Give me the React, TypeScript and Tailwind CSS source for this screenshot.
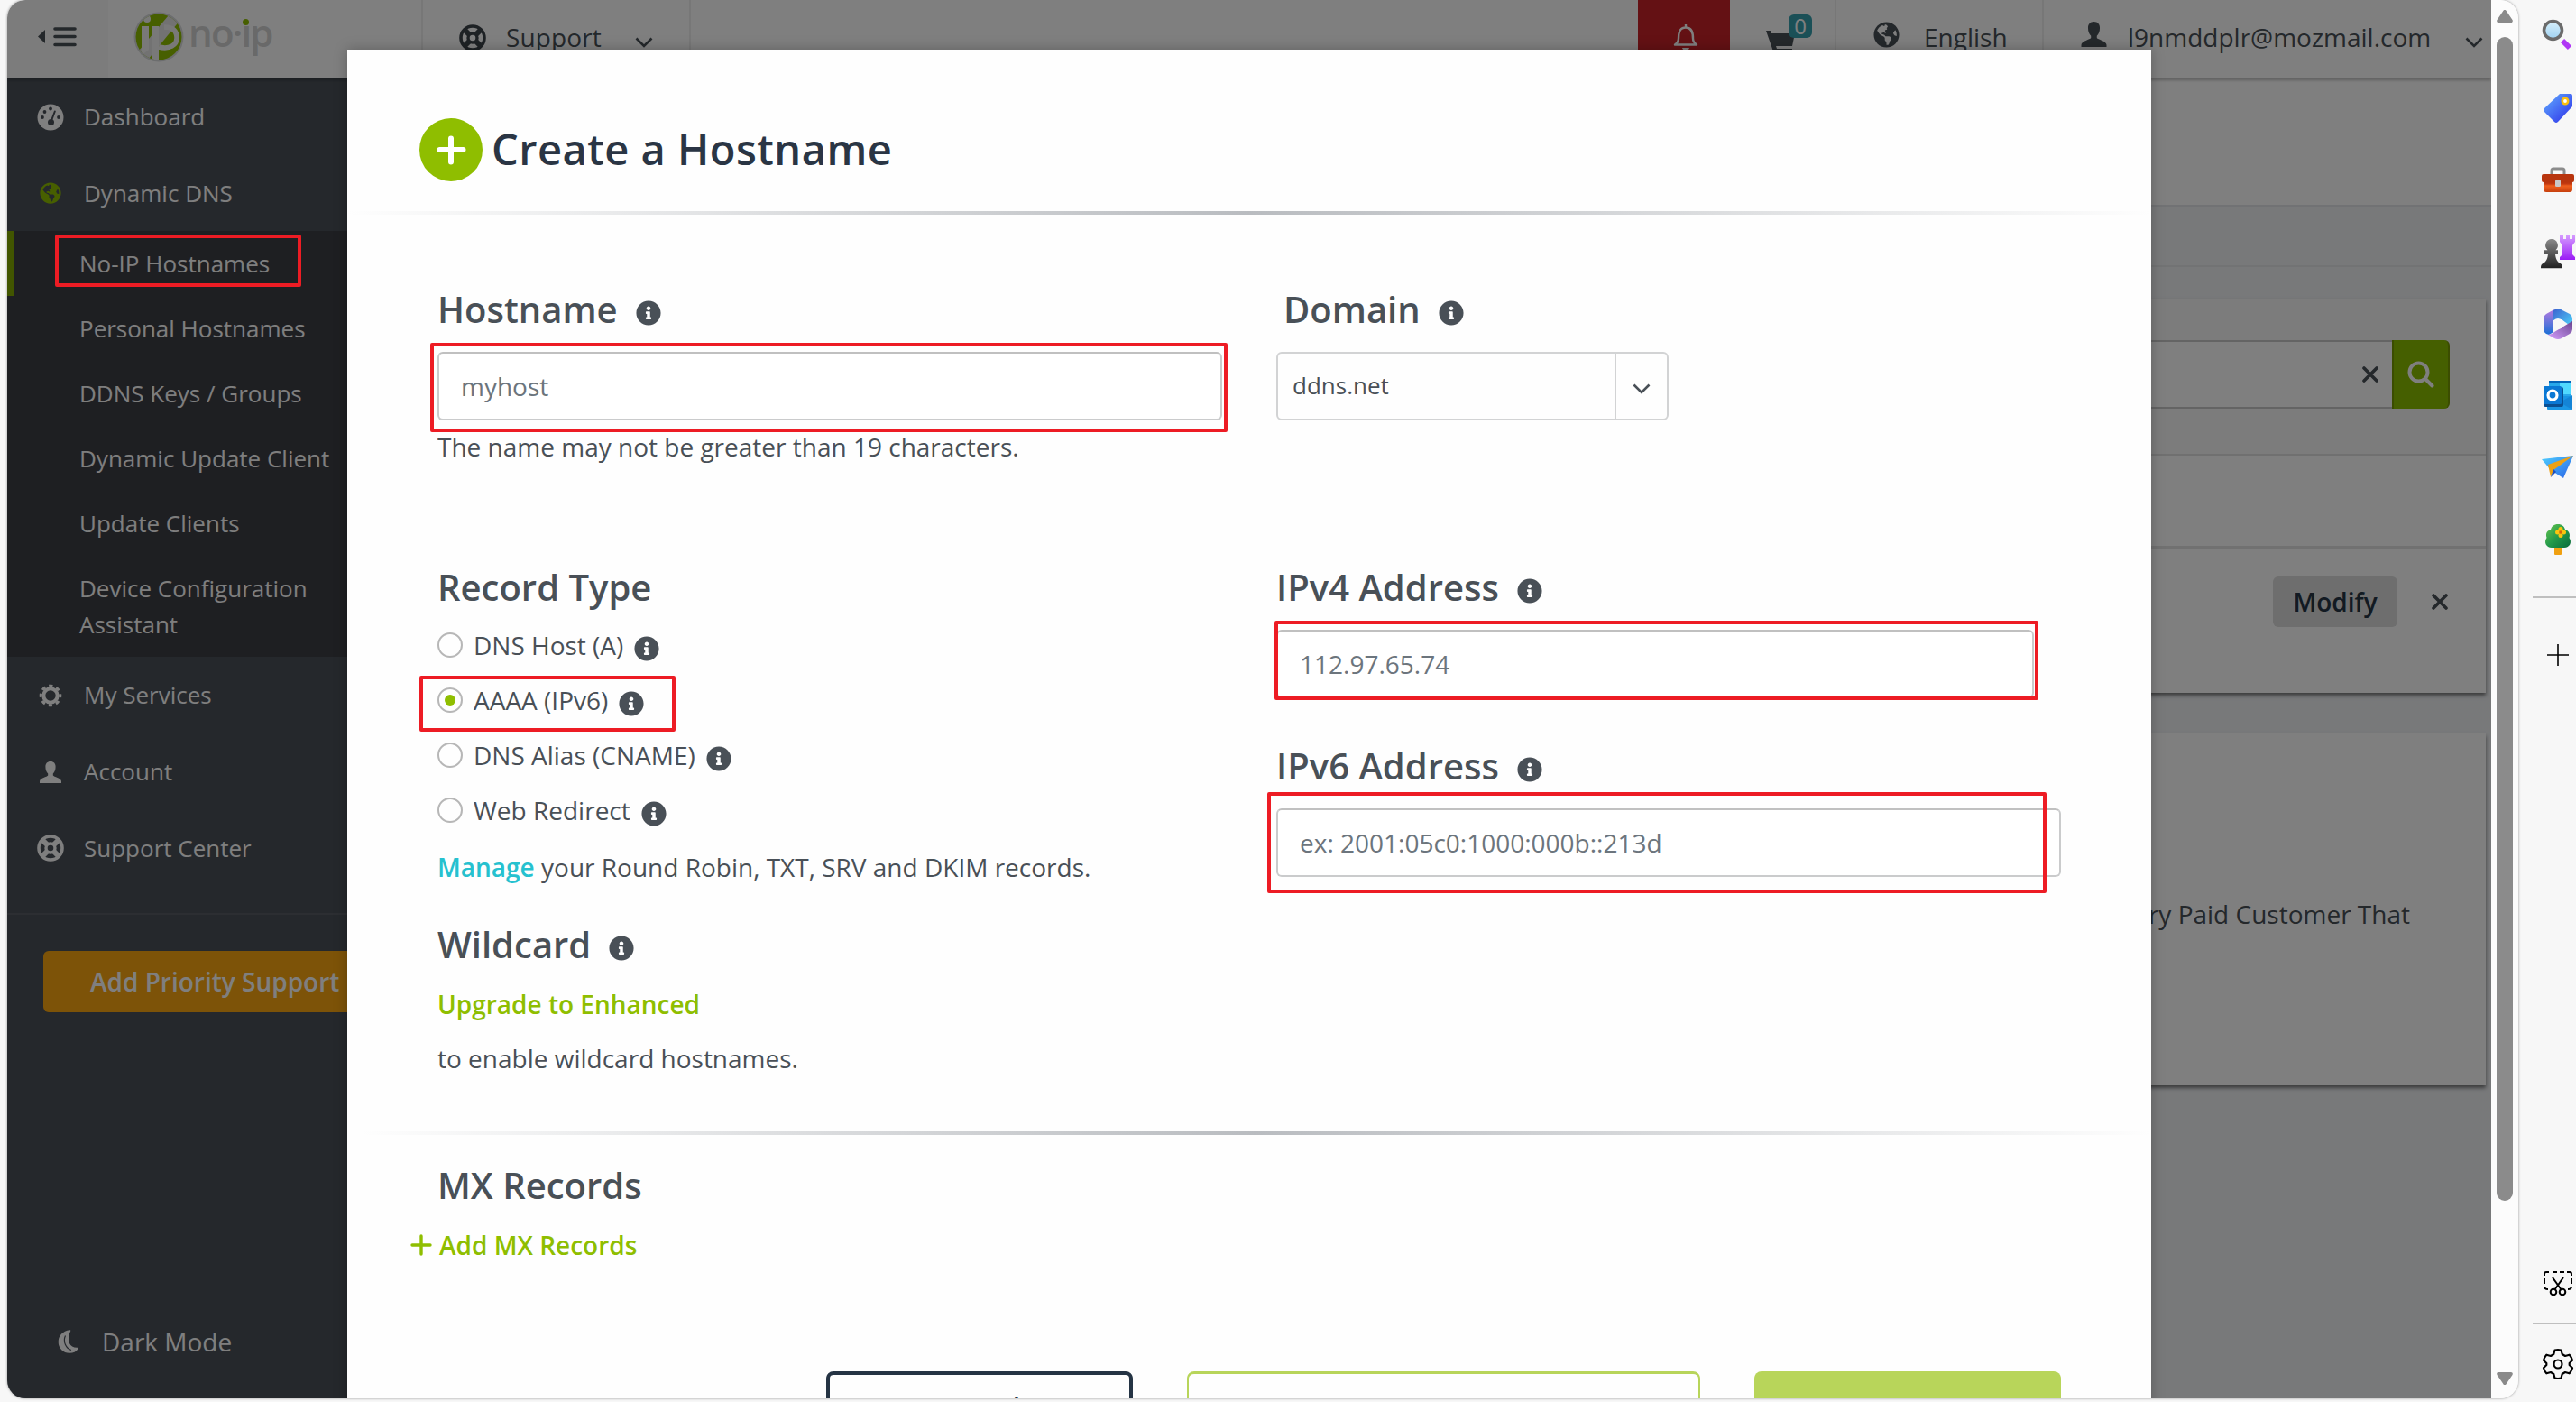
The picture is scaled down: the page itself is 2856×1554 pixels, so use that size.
import React from "react";
import { FaGlobeAmericas, FaInfoCircle } from "react-icons/fa";

const Chevron = ({ className = "" }: { className?: string }) => (
  <svg viewBox="0 0 20 12" className={`h-3 w-5 ${className}`} fill="none" stroke="currentColor" strokeWidth="2.6">
    <path d="M1.5 1.5 10 10l8.5-8.5" />
  </svg>
);

const Cross = () => (
  <svg viewBox="0 0 18 18" className="h-[18px] w-[18px]" fill="none" stroke="currentColor" strokeWidth="3.6" strokeLinecap="round">
    <path d="M2 2l14 14M16 2 2 16" />
  </svg>
);

const Ring = () => (
  <svg viewBox="0 0 30 30" className="h-[30px] w-[30px]" fill="none" stroke="currentColor">
    <circle cx="15" cy="15" r="13" strokeWidth="3.6" />
    <circle cx="15" cy="15" r="5" strokeWidth="3.4" />
    <path d="M5.5 5.500l5.500 5.500M24.500 5.500 19 11M5.500 24.500 11 19M24.500 24.500 19 19" strokeWidth="6" />
  </svg>
);

const Gauge = () => (
  <svg viewBox="0 0 30 30" className="h-[30px] w-[30px]">
    <circle cx="15" cy="15" r="14.500" fill="currentColor" />
    <g fill="#4b5159">
      <circle cx="15" cy="5.500" r="1.900" />
      <circle cx="8.500" cy="9" r="1.900" />
      <circle cx="6" cy="15" r="1.900" />
      <circle cx="24" cy="15" r="1.900" />
      <circle cx="15.500" cy="20.500" r="3.500" />
    </g>
    <path d="M15.500 20 19.800 8.500" stroke="#4b5159" strokeWidth="2" strokeLinecap="round" />
  </svg>
);

const Person = ({ className = "h-6 w-6" }: { className?: string }) => (
  <svg viewBox="0 0 24 24" className={className} fill="currentColor">
    <path d="M12 0c-3.600 0-5.600 2.400-5.600 5.800 0 3.600 1 6 2.800 7.600v2.100C8.500 17 0 18.500 0 22v2h24v-2c0-3.500-8.500-5-9.200-6.500v-2.100c1.800-1.600 2.800-4 2.800-7.600C17.600 2.400 15.600 0 12 0z" />
  </svg>
);

const Moon = () => (
  <svg viewBox="0 0 24 26" className="h-[26px] w-6" fill="currentColor" stroke="currentColor" strokeWidth="1.600" strokeLinejoin="round">
    <path d="M13.500 1C5.500 2 1.500 7.500 1.500 13.500 1.500 20 6.500 25 13 25c4 0 7-1.500 9-4.500C12.500 21 8 12 13.500 1z" />
    <path d="M8.500 6.500C5.500 13 9 20.500 15 22.500" fill="none" stroke="#4b5159" strokeWidth="1.200" />
  </svg>
);

const Info = ({ className = "" }: { className?: string }) => (
  <FaInfoCircle className={`h-7 w-7 shrink-0 text-[#495057] ${className}`} />
);

function Logo() {
  return (
    <div className="flex items-start pl-[28px]">
      <svg viewBox="0 0 56 56" className="h-[56px] w-[56px]">
        <defs>
          <clipPath id="disc">
            <circle cx="28" cy="28" r="25.500" />
          </clipPath>
        </defs>
        <circle cx="28" cy="28" r="27.500" fill="#d9dbdd" />
        <g clipPath="url(#disc)">
          <rect width="56" height="56" fill="#8fbe00" />
          <path d="M44-2 56 4 12 58 0 50z" fill="#e4e4e4" />
          <path d="M9 16h8v26l-8 6zM21 16h7v40h-7z" fill="#f3f3f3" />
          <path d="M34 17c9 0 14 4 14 12s-8 13-20 10" fill="none" stroke="#f3f3f3" strokeWidth="5.500" />
          <circle cx="15" cy="8" r="4" fill="#f3f3f3" />
        </g>
      </svg>
      <div className="relative ml-[5px] h-[56px] whitespace-nowrap font-['Open_Sans',sans-serif] text-[42px] font-semibold leading-[46px] tracking-[-1.800px] text-[#d2d2d2]">
        no·ıp
        <span className="absolute left-[60px] top-[8px] h-[7px] w-[7px] rounded-full bg-[#8fbe00]" />
      </div>
    </div>
  );
}

function TopBar() {
  return (
    <header className="relative flex h-[87px] shrink-0 bg-white text-[28px] text-[#495057] shadow-[0_2px_3px_rgba(0,0,0,0.25)]">
      <div className="flex w-[112px] items-start bg-[#f8f8f8] pl-[34px] pt-[29px]">
        <svg viewBox="0 0 44 24" className="h-6 w-11" fill="none">
          <path d="M8 4v15L0 11.500z" fill="#495057" />
          <path d="M19 3h22M19 11.500h22M19 20.500h22" stroke="#495057" strokeWidth="3.600" strokeLinecap="round" />
        </svg>
      </div>
      <div className="flex w-[349px] items-start border-r-2 border-[#efefef] pt-[13px]">
        <Logo />
      </div>
      <div className="flex w-[297px] items-start border-r-2 border-[#efefef] pl-[40px] pt-[20px]">
        <span className="mt-[7px] text-[#3d444b]">
          <Ring />
        </span>
        <span className="ml-[22px] mt-px h-10 leading-10 tracking-[0.100px]">Support</span>
        <Chevron className="ml-[37px] mt-[21px]" />
      </div>
      <div className="flex-1" />
      <div className="flex w-[102px] justify-center bg-[#c92228] pl-[3px] pt-[26px] text-white">
        <svg viewBox="0 0 28 30" className="h-[30px] w-7" fill="none" stroke="currentColor" strokeWidth="2.400">
          <path d="M14 1v3M2 23.500h24c-3-2-4-4-4-7 0-7-1.500-12-8-12s-8 5-8 12c0 3-1 5-4 7z" strokeLinejoin="round" />
          <path d="M10 27h8c-.5 2-2 3-4 3s-3.500-1-4-3z" fill="currentColor" stroke="none" />
        </svg>
      </div>
      <div className="relative w-[118px] border-r-2 border-[#efefef] pl-[40px] pt-[33px]">
        <svg viewBox="0 0 32 30" className="h-[30px] w-8" fill="#495057">
          <path d="M0 1h5l1 3h26l-3 14H11l1 3h17v3H8z" />
        </svg>
        <span className="absolute left-[65px] top-[16px] h-[26px] w-[26px] rounded-[6px] bg-[#37a0af] text-center text-[24px] leading-[26px] text-white">0</span>
      </div>
      <div className="flex w-[230px] items-start border-r-2 border-[#efefef] pl-[41px] pt-[20px]">
        <FaGlobeAmericas className="mt-[4px] h-[29px] w-[29px]" />
        <span className="ml-[27px] mt-px leading-10">English</span>
      </div>
      <div className="flex w-[496px] items-start pl-[41px] pt-[20px]">
        <Person className="mt-[4px] h-[28px] w-[29px]" />
        <span className="ml-[23px] mt-px w-[374px] leading-10">l9nmddplr@mozmail.com</span>
        <Chevron className="mt-[21px]" />
      </div>
    </header>
  );
}

const subItems = ["No-IP Hostnames", "Personal Hostnames", "DDNS Keys / Groups", "Dynamic Update Client", "Update Clients"];

function NavItem({ icon, label, height = "h-[85px]" }: { icon: React.ReactNode; label: string; height?: string }) {
  return (
    <div className={`flex items-center ${height}`}>
      <span className="ml-[33px] flex w-[30px] justify-center">{icon}</span>
      <span className="ml-[22px]">{label}</span>
    </div>
  );
}

function Sidebar() {
  return (
    <nav className="flex w-[440px] shrink-0 flex-col bg-[#4b5159] text-[26px] text-white">
      <NavItem icon={<Gauge />} label="Dashboard" />
      <NavItem height="h-[84px]" icon={<FaGlobeAmericas className="h-6 w-6 text-[#8fbe00]" />} label="Dynamic DNS" />
      <div className="flex h-[472px] flex-col bg-[#3c3e45] text-[#fdfdfd]">
        {subItems.map((s, i) => (
          <div key={s} className={`flex h-[72px] items-center border-l-8 pl-[72px] ${i === 0 ? "border-[#82aa00]" : "border-transparent"}`}>
            {s}
          </div>
        ))}
        <div className="pl-[80px] pt-[16px] leading-10">
          Device Configuration
          <br />
          Assistant
        </div>
      </div>
      <NavItem
        icon={
          <svg viewBox="0 0 26 26" className="h-[26px] w-[26px]" fill="none" stroke="currentColor">
            <circle cx="13" cy="13" r="7.700" strokeWidth="4" />
            <circle cx="13" cy="13" r="10.800" strokeWidth="3" strokeDasharray="4.240 4.240" strokeDashoffset="2.120" />
          </svg>
        }
        label="My Services"
      />
      <NavItem icon={<Person />} label="Account" />
      <NavItem icon={<Ring />} label="Support Center" height="h-[84px]" />
      <div className="mt-[30px] h-[2px] bg-[#585d64]" />
      <div className="ml-[40px] mt-[40px] flex h-[68px] items-center rounded-[6px] bg-[#fba610] pl-[52px] text-[28px] font-semibold">
        Add Priority Support
      </div>
      <div className="mt-auto flex h-[60px] items-center pb-[2px] pl-[56px] text-[28px]">
        <Moon />
        <span className="ml-[25px]">Dark Mode</span>
      </div>
      <div className="h-[32px]" />
    </nav>
  );
}

function Background() {
  return (
    <div className="flex min-h-0 flex-1">
      <Sidebar />
      <main className="flex flex-1 flex-col bg-[#f0f2f5] pr-[6px]">
        <div className="-mr-[6px] h-[142px] border-b-2 border-[#e3e5e8] bg-white" />
        <div className="-mr-[6px] h-[67px] border-b-2 border-[#e4e6e9]" />
        <section className="mt-[35px] h-[437px] bg-white shadow-[0_3px_4px_rgba(0,0,0,0.500)]">
          <div className="flex h-[174px] items-start justify-end border-b-2 border-[#e0e0e0] bg-[#f9f9f9] pr-[40px] pt-[46px]">
            <div className="flex h-[76px] w-[400px] items-center justify-end border-y-2 border-[#c8c8c8] bg-white pr-[15px] text-[#495057]">
              <Cross />
            </div>
            <div className="flex h-[76px] w-[64px] items-center justify-center rounded-r-[6px] border-x-2 border-[#769b00] bg-[#8bbe00] text-white">
              <svg viewBox="0 0 30 30" className="h-[30px] w-[30px]" fill="none" stroke="currentColor" strokeWidth="4" strokeLinecap="round">
                <circle cx="12.500" cy="12.500" r="10" />
                <path d="M20 20l7.500 7.500" />
              </svg>
            </div>
          </div>
          <div className="h-[104px] border-b-4 border-[#e2e2e2]" />
          <div className="flex items-center justify-end pr-[42px] pt-[30px]">
            <span className="flex h-[56px] w-[138px] items-center justify-center rounded-[6px] bg-[#dcdcdc] text-[28px] font-semibold text-[#253444]">
              Modify
            </span>
            <span className="ml-[38px] text-[#495057]">
              <Cross />
            </span>
          </div>
        </section>
        <section className="mt-[45px] flex h-[390px] justify-end bg-white pr-[84px] pt-[180px] text-[28px] text-[#495057] shadow-[0_3px_4px_rgba(0,0,0,0.500)]">
          <span className="leading-10">Every Paid Customer That</span>
        </section>
      </main>
    </div>
  );
}

function Heading({ text, info = true, className = "" }: { text: string; info?: boolean; className?: string }) {
  return (
    <div className={`flex h-[56px] items-center ${className}`}>
      <h3 className="whitespace-nowrap text-[40px] font-semibold leading-[56px]">{text}</h3>
      {info && <Info className="ml-[20px] mt-[8px]" />}
    </div>
  );
}

function Field({ text, className = "" }: { text: string; className?: string }) {
  return (
    <div className={`flex h-[76px] items-center rounded-[6px] border-2 border-[#cacbcc] border-t-[#c0c0c0] bg-white pb-px pl-[24px] text-[28px] text-[#6c757d] ${className}`}>
      {text}
    </div>
  );
}

function Radio({ text, on = false }: { text: string; on?: boolean }) {
  return (
    <div className="flex h-[61px] items-center">
      <span className="flex h-7 w-7 items-center justify-center rounded-full border-2 border-[#b7b7b7]">
        {on && <span className="h-3 w-3 rounded-full bg-[#8fbe00]" />}
      </span>
      <span className="ml-[12px]">{text}</span>
      <Info className="ml-[12px] mt-[9px]" />
    </div>
  );
}

function Modal() {
  return (
    <div className="absolute left-[377px] top-[55px] flex h-[1600px] w-[2000px] flex-col bg-[#fefefe] text-[28px] text-[#495057] shadow-[0_0_14px_rgba(0,0,0,0.250)]">
      <div className="flex h-[179px] items-start pl-[80px] pt-[75px]">
        <svg viewBox="0 0 70 70" className="mt-[1px] h-[70px] w-[70px]">
          <circle cx="35" cy="35" r="35" fill="#8fbe00" />
          <path d="M35 22.500v26M22.500 35h26" stroke="#fff" strokeWidth="6" strokeLinecap="round" />
        </svg>
        <h2 className="ml-[10px] text-[47px] font-semibold leading-[70px] tracking-[0.470px] text-[#2a3544]">Create a Hostname</h2>
      </div>
      <div className="h-1 shrink-0 bg-gradient-to-r from-[#fefefe] via-[#b9bcc0] to-[#fefefe]" />

      <div className="flex h-[326px] pl-[100px] pt-[77px]">
        <div className="w-[930px]">
          <Heading text="Hostname" />
          <Field text="myhost" className="mt-[19px] w-[870px]" />
          <div className="mt-[9px] leading-10">The name may not be greater than 19 characters.</div>
        </div>
        <div>
          <Heading text="Domain" className="pl-[8px]" />
          <div className="mt-[19px] flex h-[76px] w-[435px] rounded-[6px] border-2 border-[#d2d3d4] text-[26px]">
            <span className="flex flex-1 items-center pb-px pl-[16px]">ddns.net</span>
            <span className="flex w-[58px] items-center justify-center border-l-2 border-[#d2d3d4] pt-[6px]">
              <Chevron />
            </span>
          </div>
        </div>
      </div>

      <div className="flex h-[694px] pl-[100px] pt-[59px]">
        <div className="w-[930px]">
          <Heading text="Record Type" info={false} />
          <div className="mt-[5px]">
            <Radio text="DNS Host (A)" />
            <Radio text="AAAA (IPv6)" on />
            <Radio text="DNS Alias (CNAME)" />
            <Radio text="Web Redirect" />
          </div>
          <div className="mt-[13px] leading-10">
            <span className="font-semibold text-[#26c1cf]">Manage</span> your Round Robin, TXT, SRV and DKIM records.
          </div>
          <Heading text="Wildcard" className="mt-[38px]" />
          <div className="mt-[18px] font-semibold leading-10 text-[#8fbe00]">Upgrade to Enhanced</div>
          <div className="mt-[20px] leading-10">to enable wildcard hostnames.</div>
        </div>
        <div>
          <Heading text="IPv4 Address" />
          <Field text="112.97.65.74" className="mt-[19px] w-[840px]" />
          <Heading text="IPv6 Address" className="mt-[47px]" />
          <Field text="ex: 2001:05c0:1000:000b::213d" className="mt-[19px] w-[870px]" />
        </div>
      </div>
      <div className="-mt-[4px] ml-[15px] h-1 shrink-0 bg-gradient-to-r from-[#fefefe] via-[#b9bcc0] to-[#fefefe]" />

      <div className="pl-[70px] pt-[28px]">
        <Heading text="MX Records" info={false} className="pl-[30px]" />
        <div className="mt-[18px] flex h-10 items-center font-semibold text-[#8fbe00]">
          <svg viewBox="0 0 24 24" className="h-6 w-6" stroke="currentColor" strokeWidth="3.400" strokeLinecap="round">
            <path d="M12 2v20M2 12h20" />
          </svg>
          <span className="ml-[8px]">Add MX Records</span>
        </div>
      </div>
      <div className="ml-[531px] mt-[120px] flex gap-[60px] font-semibold">
        <span className="flex h-[80px] w-[340px] justify-center rounded-[8px] border-4 border-[#253444] pt-[16px] leading-10 text-[#253444]">Cancel</span>
        <span className="h-[80px] w-[569px] rounded-[8px] border-2 border-[#b8d55a] border-t-[3px]" />
        <span className="h-[80px] w-[340px] rounded-[8px] bg-[#b8d55a]" />
      </div>
    </div>
  );
}

function Marks() {
  return (
    <>
      <div className="absolute left-[53px] top-[260px] h-[58px] w-[273px] rounded-[2px] border-4 border-[#ed1c24]" />
      <div className="absolute left-[469px] top-[380px] h-[99px] w-[884px] rounded-[2px] border-4 border-[#ed1c24]" />
      <div className="absolute left-[457px] top-[749px] h-[62px] w-[284px] rounded-[2px] border-4 border-[#ed1c24]" />
      <div className="absolute left-[1405px] top-[688px] h-[88px] w-[847px] rounded-[2px] border-4 border-[#ed1c24]" />
      <div className="absolute left-[1397px] top-[878px] h-[112px] w-[864px] rounded-[2px] border-4 border-[#ed1c24]" />
    </>
  );
}

function Scrollbar() {
  return (
    <div className="flex w-[30px] shrink-0 flex-col items-center bg-[#fcfcfc] pt-[11px]">
      <svg viewBox="0 0 18 14" className="h-[14px] w-[18px]" fill="#8a8a8a">
        <path d="M9 0c1 0 1.500.5 2 1.500l6.500 9.500c.8 1.500 0 3-1.500 3H2c-1.500 0-2.300-1.500-1.500-3L7 1.500C7.500.5 8 0 9 0z" />
      </svg>
      <div className="mt-[16px] h-[1290px] w-[18px] rounded-full bg-[#8b8b8b]" />
      <svg viewBox="0 0 18 14" className="mt-[190px] h-[14px] w-[18px] rotate-180" fill="#8a8a8a">
        <path d="M9 0c1 0 1.500.5 2 1.500l6.500 9.500c.8 1.500 0 3-1.500 3H2c-1.500 0-2.300-1.500-1.500-3L7 1.500C7.500.5 8 0 9 0z" />
      </svg>
    </div>
  );
}

function EdgeRail() {
  return (
    <aside className="flex w-[48px] shrink-0 flex-col items-center pl-[8px]">
      <svg className="mt-[20px] h-9 w-9 shrink-0" viewBox="0 0 36 36">
        <defs>
          <linearGradient id="g1" x1="0" y1="0" x2="0" y2="1"><stop offset="0" stopColor="#d8f0fb" /><stop offset="1" stopColor="#9fd2f2" /></linearGradient>
          <linearGradient id="g2" x1="0" y1="0" x2="1" y2="1"><stop offset="0" stopColor="#63b0ff" /><stop offset="1" stopColor="#2b2be8" /></linearGradient>
          <linearGradient id="g3" x1="0" y1="0" x2="0" y2="1"><stop offset="0" stopColor="#a82a0c" /><stop offset="0.350" stopColor="#c43a10" /><stop offset="0.500" stopColor="#f0601e" /><stop offset="1" stopColor="#c7400e" /></linearGradient>
          <linearGradient id="g4" x1="0" y1="0" x2="0" y2="1"><stop offset="0" stopColor="#8a8a8a" /><stop offset="1" stopColor="#222" /></linearGradient>
          <linearGradient id="g5" x1="0" y1="0" x2="0" y2="1"><stop offset="0" stopColor="#d59bff" /><stop offset="1" stopColor="#9a1cf5" /></linearGradient>
          <linearGradient id="g6" x1="0" y1="0" x2="0" y2="1"><stop offset="0" stopColor="#b47be0" /><stop offset="1" stopColor="#1b6fd6" /></linearGradient>
          <linearGradient id="g7" x1="0" y1="0" x2="1" y2="1"><stop offset="0" stopColor="#3b62d0" /><stop offset="1" stopColor="#4fd8fb" /></linearGradient>
          <linearGradient id="g8" x1="0" y1="1" x2="1" y2="0"><stop offset="0" stopColor="#d6a0ff" /><stop offset="1" stopColor="#6a4590" /></linearGradient>
          <linearGradient id="g9" x1="0" y1="0" x2="1" y2="1"><stop offset="0" stopColor="#4fd0ff" /><stop offset="1" stopColor="#2a62e6" /></linearGradient>
          <linearGradient id="g10" x1="0" y1="0" x2="1" y2="1"><stop offset="0" stopColor="#6cc94f" /><stop offset="0.500" stopColor="#249a4a" /><stop offset="1" stopColor="#0b6b3a" /></linearGradient>
        </defs>
        <path d="M23 25l8 8" stroke="#b036f5" strokeWidth="6" />
        <circle cx="12.500" cy="13.500" r="10" fill="url(#g1)" stroke="#6b6b6b" strokeWidth="3.600" />
      </svg>
      <svg className="mt-[46px] h-9 w-9 shrink-0" viewBox="0 0 36 36">
        <path d="M20 2h12q2 0 2 2v12L18 33q-2 2-4 0L3 22q-2-2 0-4z" fill="url(#g2)" />
        <circle cx="26" cy="10" r="3.200" fill="#fff" stroke="#fbbf10" strokeWidth="2.600" />
      </svg>
      <svg className="mt-[45px] h-9 w-9 shrink-0" viewBox="0 0 36 36">
        <path d="M11 11V6q0-2 2-2h10q2 0 2 2v5" fill="none" stroke="#8c8c8c" strokeWidth="3" />
        <rect x="2" y="16" width="32" height="14" rx="3" fill="url(#g3)" />
        <rect x="0" y="10" width="36" height="9" rx="2" fill="#b8350e" />
        <rect x="15" y="16" width="6" height="8" rx="1.500" fill="#c9c9c9" />
      </svg>
      <svg className="mt-[41px] h-[38px] w-[38px] shrink-0" viewBox="0 0 38 38">
        <path d="M21 1h4v4h3V1h4v4h3V1h3v7l-3 4v10l3 3v3H21v-3l3-3V12l-3-4z" fill="url(#g5)" />
        <path d="M12 5a7 7 0 0 1 4.500 12.200h2.500v4h-3c.3 5 2 9 6 11 1.500 1 2 2 2 5H0c0-3 .5-4 2-5 4-2 5.700-6 6-11H4v-4h3.500A7 7 0 0 1 12 5z" fill="url(#g4)" />
      </svg>
      <svg className="mt-[43px] h-9 w-9 shrink-0" viewBox="0 0 36 36">
        <path d="M14 2 5 7Q2 9 2 12v12q0 3 3 5l3 1 5-3V5z" fill="url(#g6)" />
        <path d="M13 3q5-4 10 0l8 4q3 2 3 6v9L22 13l-9 1z" fill="url(#g7)" />
        <path d="M34 15v9q0 3-3 5l-9 5q-4 2-8 0l-7-4q4 0 7-3l10-6z" fill="url(#g8)" />
        <circle cx="18" cy="18" r="6" fill="#f7f7f7" />
      </svg>
      <svg className="mt-[44px] h-9 w-9 shrink-0" viewBox="0 0 36 36">
        <rect x="8" y="2" width="24" height="18" fill="#28a8ea" />
        <rect x="20" y="3" width="12" height="13" fill="#50d9ff" />
        <rect x="8" y="1" width="24" height="2" fill="#0364b8" />
        <path d="M6 18h28v14q0 1-1 1H7q-1 0-1-1z" fill="#1a96e4" />
        <path d="M34 17 20 25l14 8z" fill="#1484d6" />
        <rect x="2" y="8" width="22" height="22" rx="2" fill="#0a4f91" />
        <rect x="2" y="7" width="20" height="20" rx="1.500" fill="#0a78d4" />
        <circle cx="12" cy="17" r="5" fill="none" stroke="#fff" strokeWidth="3.200" />
      </svg>
      <svg className="mt-[44px] h-9 w-9 shrink-0" viewBox="0 0 36 36">
        <path d="M0 8 35 4 24 29 10 20z" fill="url(#g9)" />
        <path d="M7 14 35 4 13 20l-3 8z" fill="#eea114" />
        <path d="M13 19l3 3-6 6z" fill="#1d4fbd" />
      </svg>
      <svg className="mt-[43px] h-9 w-9 shrink-0" viewBox="0 0 36 36">
        <rect x="14" y="24" width="8" height="11" rx="1" fill="#f0a010" />
        <path d="M18 1c4.500 0 7 2.500 8 6 4 1 6 5 4.500 9 3.500 5 .5 11-5.500 11H11C5 27 2 21 5.500 16 4 11 6 8 10 7c1-3.500 3.500-6 8-6z" fill="url(#g10)" />
        <g fill="#fbc40f">
          <circle cx="21" cy="6.500" r="2.500" />
          <circle cx="21" cy="13.500" r="2.500" />
          <circle cx="17.500" cy="10" r="2.500" />
          <circle cx="24.500" cy="10" r="2.500" />
        </g>
        <circle cx="21" cy="10" r="1.800" fill="#d9650a" />
      </svg>
      <div className="-ml-[8px] mt-[45px] h-[2px] w-[48px] shrink-0 bg-[#bfbfbf]" />
      <svg className="mt-[51px] h-6 w-6 shrink-0" viewBox="0 0 24 24" stroke="#000" strokeWidth="1.600">
        <path d="M12 0v24M0 12h24" />
      </svg>
      <svg className="mt-[670px] h-[30px] w-[34px] shrink-0" viewBox="0 0 34 30" fill="none" stroke="#000" strokeWidth="2">
        <path d="M2 6V4q0-2 2-2h3M11 2h5M19 2h5M27 2h3q2 0 2 2v2M2 9v6M32 9v6M2 18q0 3 4 3M32 18q0 3-4 3" />
        <path d="M11 8l10 14M23 8 13 22" />
        <circle cx="12" cy="24" r="3.300" />
        <circle cx="22" cy="24" r="3.300" />
      </svg>
      <div className="-ml-[8px] mt-[28px] h-[2px] w-[48px] shrink-0 bg-[#bfbfbf]" />
      <svg className="mt-[26px] h-9 w-9 shrink-0" viewBox="0 0 36 36" fill="none" stroke="#000" strokeWidth="2.200" strokeLinejoin="round">
        <path d="M14.500 2.500q3.500-1 7 0l1.200 4.500 3.300 2 4.700-1.300q2.500 2.700 3.300 6L30.700 17v2l3.300 3.300q-.8 3.300-3.300 6L26 27l-3.300 2-1.200 4.500q-3.500 1-7 0L13.300 29 10 27l-4.700 1.300q-2.500-2.700-3.300-6L5.300 19v-2L2 13.700q.8-3.300 3.300-6L10 9l3.300-2z" />
        <circle cx="18" cy="18" r="4.500" />
      </svg>
    </aside>
  );
}

export default function App() {
  return (
    <div className="flex h-[1554px] w-[2856px] overflow-hidden bg-[#f7f7f7] pl-2 font-['Open_Sans',sans-serif]">
      <div className="flex h-[1550px] w-[2784px] shrink-0 overflow-hidden rounded-[20px] shadow-[0_0_3px_rgba(0,0,0,0.400)]">
        <div className="relative flex h-full w-[2754px] flex-col overflow-hidden">
          <TopBar />
          <Background />
          <div className="absolute inset-0 bg-black/50" />
          <Modal />
          <Marks />
        </div>
        <Scrollbar />
      </div>
      <div className="w-[16px] shrink-0" />
      <EdgeRail />
    </div>
  );
}
